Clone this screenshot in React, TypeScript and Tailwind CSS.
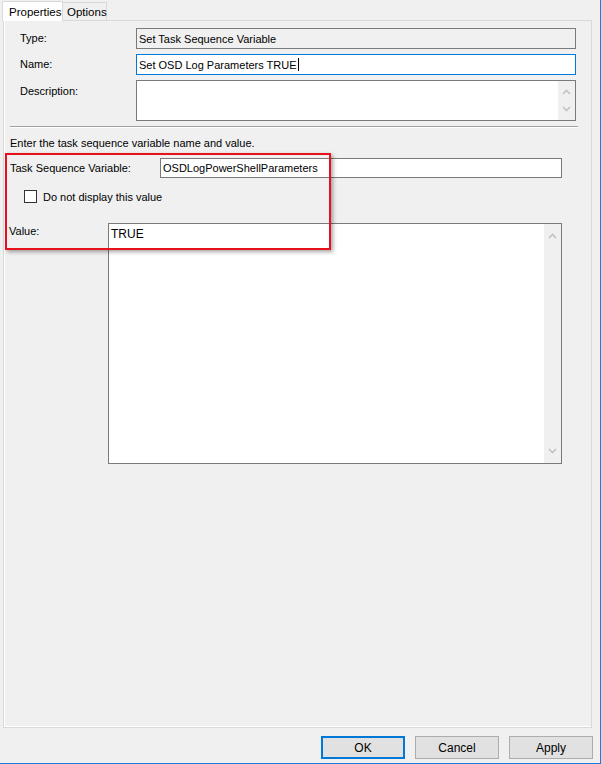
import React from "react";

function Chevron({ dir }: { dir: "up" | "down" }) {
  return (
    <svg width="9" height="6" viewBox="0 0 9 6" className="block">
      <polyline
        points={dir === "up" ? "1,5 4.5,1.5 8,5" : "1,1 4.5,4.5 8,1"}
        fill="none"
        stroke="#c2c2c2"
        strokeWidth="1.6"
      />
    </svg>
  );
}

function ScrollBar({ tight }: { tight?: boolean }) {
  return (
    <div
      className={`flex h-full w-[17px] shrink-0 flex-col items-center justify-between bg-[#f0f0f0] ${
        tight ? "py-[8px]" : "py-[9px]"
      }`}
    >
      <Chevron dir="up" />
      <Chevron dir="down" />
    </div>
  );
}

function Field({
  children,
  className = "",
}: {
  children?: React.ReactNode;
  className?: string;
}) {
  return (
    <div className={`flex items-center border border-[#7a7a7a] px-[2px] ${className}`}>
      {children}
    </div>
  );
}

function Button({ label, primary }: { label: string; primary?: boolean }) {
  return (
    <div
      className={`flex h-[23px] w-[84px] items-center justify-center bg-[#e1e1e1] text-[12px] text-black ${
        primary ? "border-2 border-[#0078d7]" : "border border-[#adadad]"
      }`}
    >
      {label}
    </div>
  );
}

export default function App() {
  return (
    <div
      className="h-[764px] w-[601px] border-b border-r border-[#1c7ed6] bg-[#f0f0f0] text-[11px] leading-[14px] text-black"
      style={{ fontFamily: '"Liberation Sans", Arial, sans-serif' }}
    >
      {/* tabs */}
      <div className="flex h-[20px] items-end pl-[2px]">
        <div className="relative z-10 -mb-px flex h-[20px] w-[61px] items-center border border-b-0 border-[#d9d9d9] bg-white pl-[6px] text-[11.5px]">
          Properties
        </div>
        <div className="flex h-[18px] w-[44px] items-center border border-b-0 border-l-0 border-[#d9d9d9] bg-[#f0f0f0] pl-[4px] text-[11.5px]">
          Options
        </div>
      </div>

      {/* tab page */}
      <div className="relative ml-[3px] h-[708px] w-[589px] border border-[#d9d9d9] bg-[#f0f0f0] shadow-[inset_1px_0_0_#fff,inset_0_-1px_0_#fff]">
        <div className="ml-[16px] mt-[7px] flex items-start">
          <div className="w-[116px] pt-[3px]">Type:</div>
          <Field className="h-[21px] w-[440px] bg-[#f0f0f0]">Set Task Sequence Variable</Field>
        </div>
        <div className="ml-[16px] mt-[5px] flex items-start">
          <div className="w-[116px] pt-[3px]">Name:</div>
          <div className="flex h-[21px] w-[440px] items-center border border-[#0078d7] bg-white px-[2px]">
            Set OSD Log Parameters TRUE
            <span className="ml-px inline-block h-[13px] w-px bg-black" />
          </div>
        </div>
        <div className="ml-[16px] mt-[5px] flex items-start">
          <div className="w-[116px] pt-[4px]">Description:</div>
          <div className="flex h-[41px] w-[440px] justify-end border border-[#7a7a7a] bg-white">
            <ScrollBar tight />
          </div>
        </div>

        <div className="ml-[6px] mt-[5px] w-[568px] border-t border-[#a0a0a0] shadow-[0_1px_0_#fff]" />

        <div className="ml-[6px] mt-[9px]">Enter the task sequence variable name and value.</div>

        <div className="ml-[6px] mt-[8px] flex items-center">
          <div className="w-[150px]">Task Sequence Variable:</div>
          <div className="flex h-[20px] w-[402px] items-center border border-[#7a7a7a] bg-white px-[2px]">
            OSDLogPowerShellParameters
          </div>
        </div>

        <div className="ml-[20px] mt-[11px] flex items-center">
          <div className="h-[13px] w-[13px] border border-[#333] bg-white" />
          <div className="ml-[6px] pt-[1px]">Do not display this value</div>
        </div>

        <div className="ml-[5px] mt-[19px] flex items-start">
          <div className="w-[99px] pt-[1px]">Value:</div>
          <div className="flex h-[241px] w-[454px] border border-[#7a7a7a] bg-white">
            <div className="flex-1 px-[2px] pt-[3px] text-[12px]">TRUE</div>
            <ScrollBar />
          </div>
        </div>

        {/* annotation box */}
        <div className="absolute left-[1px] top-[132px] h-[97px] w-[326px] border-2 border-[#e8101c] shadow-[2px_2px_4px_rgba(0,0,0,0.35)]" />
      </div>

      {/* buttons */}
      <div className="mt-[8px] flex justify-end gap-[10px] pr-[7px]">
        <Button label="OK" primary />
        <Button label="Cancel" />
        <Button label="Apply" />
      </div>
    </div>
  );
}
